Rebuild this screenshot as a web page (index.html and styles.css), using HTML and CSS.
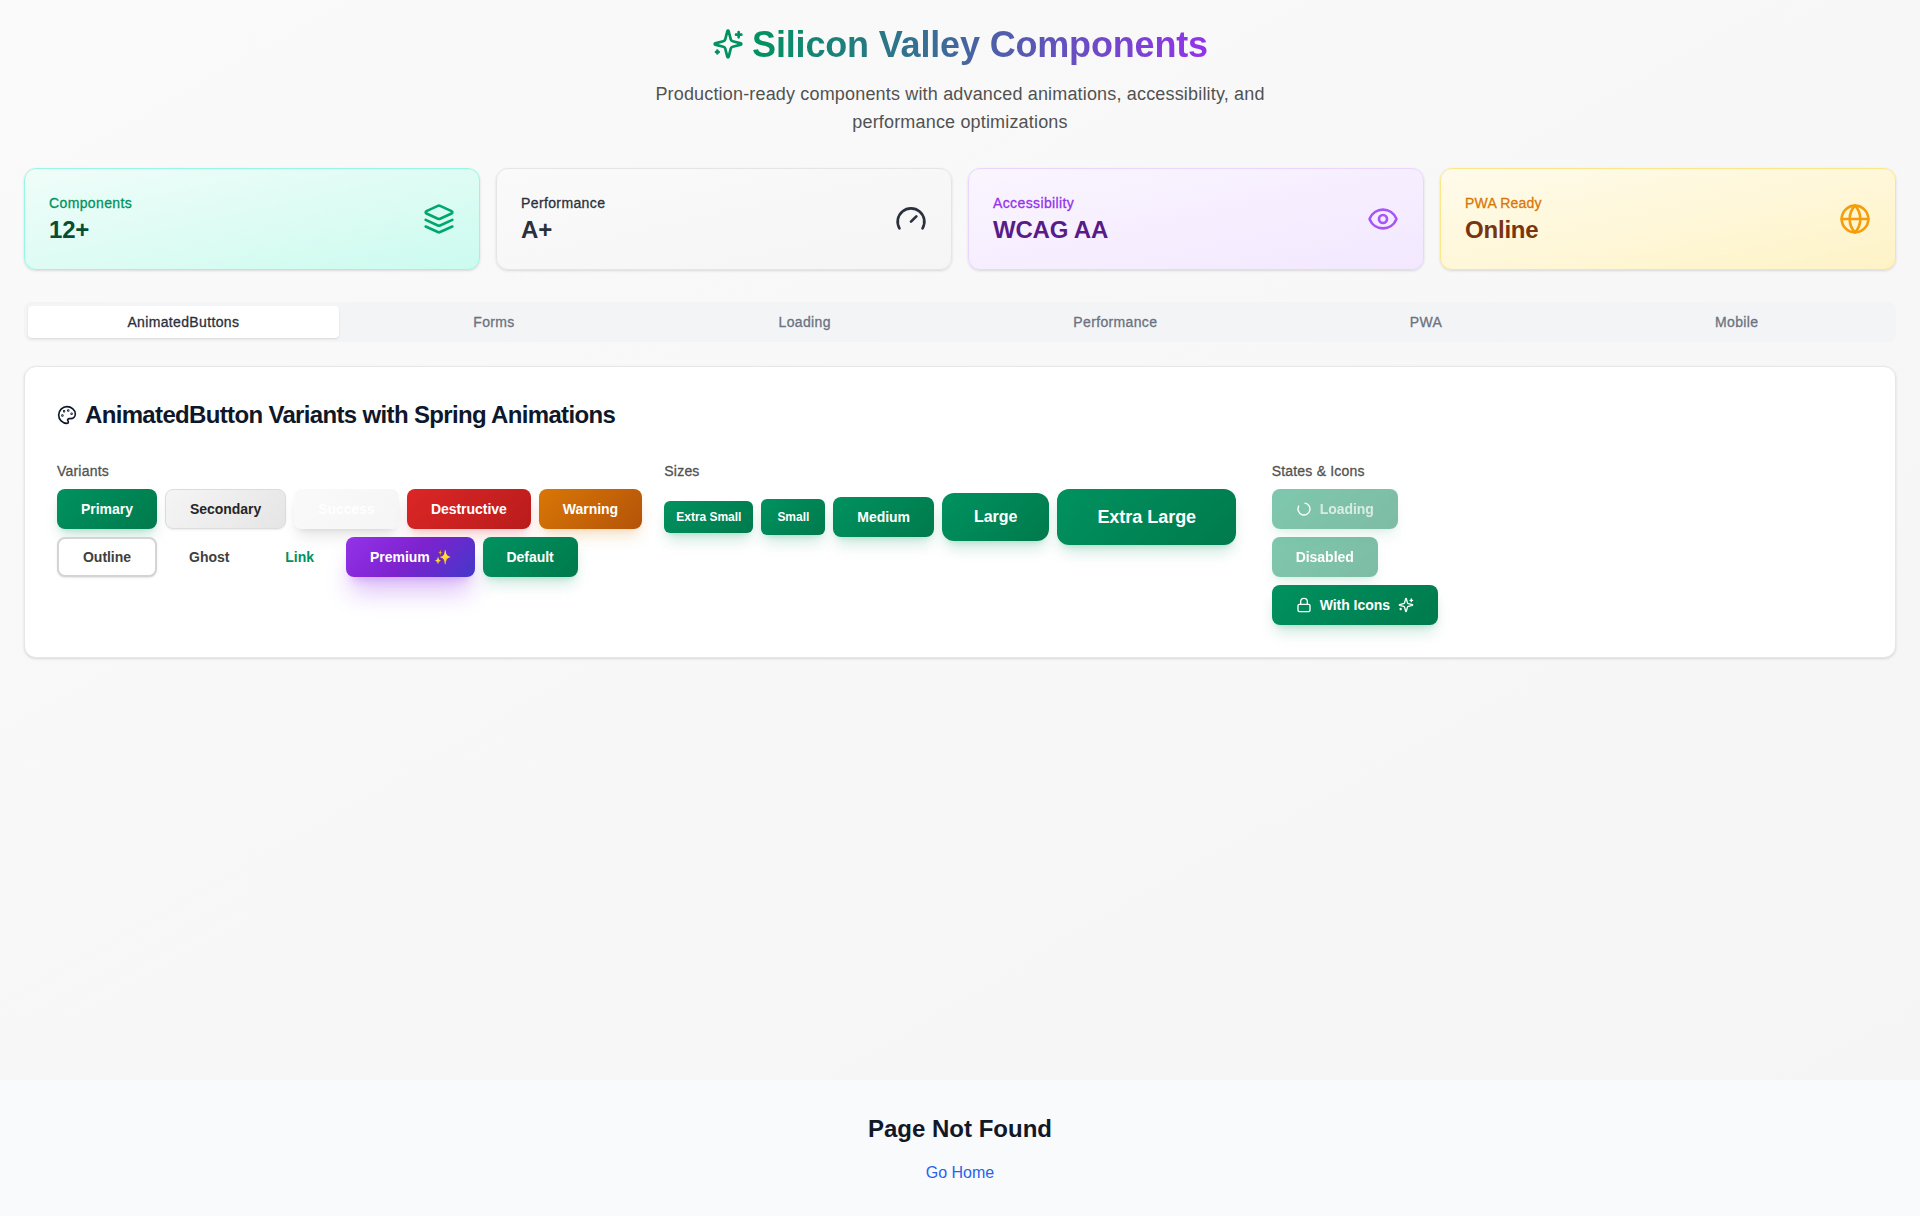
FILE: index.html
```html
<!DOCTYPE html>
<html lang="en">
<head>
<meta charset="utf-8">
<title>Silicon Valley Components</title>
<link rel="stylesheet" href="styles.css">
</head>
<body>
<svg class="sprite" aria-hidden="true">
  <symbol id="sparkles" viewBox="0 0 24 24"><path d="M9.937 15.5A2 2 0 0 0 8.5 14.063l-6.135-1.582a.5.5 0 0 1 0-.962L8.5 9.936A2 2 0 0 0 9.937 8.5l1.582-6.135a.5.5 0 0 1 .963 0L14.063 8.5A2 2 0 0 0 15.5 9.937l6.135 1.581a.5.5 0 0 1 0 .964L15.5 14.063a2 2 0 0 0-1.437 1.437l-1.582 6.135a.5.5 0 0 1-.963 0z"/><path d="M20 3v4M22 5h-4M4 17v2M5 18H3"/></symbol>
</svg>
<main class="showcase">
  <header class="hero">
    <h1 class="hero-title"><svg class="icon hero-icon"><use href="#sparkles"/></svg><span class="hero-text">Silicon Valley Components</span></h1>
    <p class="hero-sub">Production-ready components with advanced animations, accessibility, and performance optimizations</p>
  </header>

  <section class="stats">
    <article class="stat stat-green">
      <div><p class="stat-label">Components</p><p class="stat-value">12+</p></div>
      <svg class="icon stat-icon" viewBox="0 0 24 24"><path d="m12.83 2.18a2 2 0 0 0-1.66 0L2.6 6.08a1 1 0 0 0 0 1.83l8.58 3.91a2 2 0 0 0 1.66 0l8.58-3.9a1 1 0 0 0 0-1.83Z"/><path d="m22 17.65-9.17 4.16a2 2 0 0 1-1.66 0L2 17.65"/><path d="m22 12.65-9.17 4.16a2 2 0 0 1-1.66 0L2 12.65"/></svg>
    </article>
    <article class="stat stat-gray">
      <div><p class="stat-label">Performance</p><p class="stat-value">A+</p></div>
      <svg class="icon stat-icon" viewBox="0 0 24 24"><path d="m12 14 4-4"/><path d="M3.34 19a10 10 0 1 1 17.32 0"/></svg>
    </article>
    <article class="stat stat-purple">
      <div><p class="stat-label">Accessibility</p><p class="stat-value">WCAG AA</p></div>
      <svg class="icon stat-icon" viewBox="0 0 24 24"><path d="M2.062 12.348a1 1 0 0 1 0-.696 10.75 10.75 0 0 1 19.876 0 1 1 0 0 1 0 .696 10.75 10.75 0 0 1-19.876 0"/><circle cx="12" cy="12" r="3"/></svg>
    </article>
    <article class="stat stat-amber">
      <div><p class="stat-label">PWA Ready</p><p class="stat-value">Online</p></div>
      <svg class="icon stat-icon" viewBox="0 0 24 24"><circle cx="12" cy="12" r="10"/><path d="M12 2a14.5 14.5 0 0 0 0 20 14.5 14.5 0 0 0 0-20"/><path d="M2 12h20"/></svg>
    </article>
  </section>

  <nav class="tabs">
    <button class="tab tab-active">AnimatedButtons</button>
    <button class="tab">Forms</button>
    <button class="tab">Loading</button>
    <button class="tab">Performance</button>
    <button class="tab">PWA</button>
    <button class="tab">Mobile</button>
  </nav>

  <section class="panel">
    <h3 class="panel-title"><svg class="icon panel-icon" viewBox="0 0 24 24"><circle cx="13.5" cy="6.5" r=".5"/><circle cx="17.5" cy="10.5" r=".5"/><circle cx="8.5" cy="7.5" r=".5"/><circle cx="6.5" cy="12.5" r=".5"/><path d="M12 2C6.5 2 2 6.5 2 12s4.5 10 10 10c.926 0 1.648-.746 1.648-1.688 0-.437-.18-.835-.437-1.125-.29-.289-.438-.652-.438-1.125a1.64 1.64 0 0 1 1.668-1.668h1.996c3.051 0 5.555-2.503 5.555-5.554C21.965 6.012 17.461 2 12 2z"/></svg><span>AnimatedButton Variants with Spring Animations</span></h3>
    <div class="groups">
      <div class="group">
        <h4 class="group-label">Variants</h4>
        <div class="row">
          <button class="btn primary">Primary</button>
          <button class="btn secondary">Secondary</button>
          <button class="btn success">Success</button>
          <button class="btn destructive">Destructive</button>
          <button class="btn warning">Warning</button>
          <button class="btn outline">Outline</button>
          <button class="btn ghost">Ghost</button>
          <button class="btn link">Link</button>
          <button class="btn premium">Premium ✨</button>
          <button class="btn primary">Default</button>
        </div>
      </div>
      <div class="group">
        <h4 class="group-label">Sizes</h4>
        <div class="row row-center">
          <button class="btn primary xs">Extra Small</button>
          <button class="btn primary sm">Small</button>
          <button class="btn primary">Medium</button>
          <button class="btn primary lg">Large</button>
          <button class="btn primary xl">Extra Large</button>
        </div>
      </div>
      <div class="group">
        <h4 class="group-label">States &amp; Icons</h4>
        <div class="stack">
          <button class="btn primary faded"><svg class="icon btn-icon" viewBox="0 0 24 24"><path d="M21 12a9 9 0 1 1-6.219-8.56" transform="rotate(-80 12 12)"/></svg><span class="loading-text">Loading</span></button>
          <button class="btn primary faded">Disabled</button>
          <button class="btn primary"><svg class="icon btn-icon" viewBox="0 0 24 24"><rect width="18" height="11" x="3" y="11" rx="2"/><path d="M7 11V7a5 5 0 0 1 10 0v4"/></svg><span>With Icons</span><svg class="icon btn-icon"><use href="#sparkles"/></svg></button>
        </div>
      </div>
    </div>
  </section>
</main>
<footer class="missing">
  <h2 class="missing-title">Page Not Found</h2>
  <a class="missing-link" href="#">Go Home</a>
</footer>
</body>
</html>
```
FILE: styles.css
```css
* { box-sizing: border-box; }
body, h1, h2, h3, h4, p { margin: 0; }
body { font-family: "Liberation Sans", Arial, sans-serif; color: #0f172a; }
button { font: inherit; border: 0; background: none; }
.sprite { display: none; }
.icon { fill: none; stroke: currentColor; stroke-width: 2; stroke-linecap: round; stroke-linejoin: round; flex: none; }

.showcase { min-height: 1080px; padding: 24px; background: linear-gradient(to bottom right, #fafafa, #f5f5f5); }
.hero { display: flex; flex-direction: column; align-items: center; gap: 16px; text-align: center; }
.hero-title { display: flex; align-items: center; gap: 8px; height: 40px; font-size: 36px; font-weight: 700; letter-spacing: -.17px; }
.hero-icon { width: 32px; height: 32px; color: #00925f; }
.hero-text { padding-top: 2px; line-height: 42px; background: linear-gradient(to right, #00925f, #9333ea); background-clip: text; color: transparent; }
.hero-sub { max-width: 672px; font-size: 18px; line-height: 28px; letter-spacing: .17px; color: #525252; }

.stats { display: grid; grid-template-columns: repeat(4, 1fr); gap: 16px; margin-top: 32px; }
.stat { display: flex; align-items: center; justify-content: space-between; padding: 24px; border: 1px solid; border-radius: 12px; box-shadow: 0 1px 3px rgba(0,0,0,.1), 0 1px 2px -1px rgba(0,0,0,.1); }
.stat-label { font-size: 14px; line-height: 20px; letter-spacing: .38px; -webkit-text-stroke: .3px; }
.stat-value { height: 32px; padding-top: 1px; font-size: 24px; line-height: 32px; font-weight: 700; letter-spacing: -.2px; }
.stat-icon { width: 32px; height: 32px; }
.stat-green { background: linear-gradient(to bottom right, #f0fdf9, #ccfbef); border-color: #99f6e0; color: #00925f; }
.stat-green .stat-value { color: #064e33; }
.stat-green .stat-icon { color: #00a76d; }
.stat-gray { background: linear-gradient(to bottom right, #fafafa, #f5f5f5); border-color: #e5e5e8; color: #2a303c; }
.stat-purple { background: linear-gradient(to bottom right, #faf5ff, #f3e8ff); border-color: #e9d5ff; color: #9333ea; }
.stat-purple .stat-value { color: #581c87; }
.stat-purple .stat-icon { color: #a855f7; }
.stat-amber { background: linear-gradient(to bottom right, #fffbeb, #fef3c7); border-color: #fde68a; color: #d97706; }
.stat-amber .stat-label { letter-spacing: .2px; }
.stat-amber .stat-value { color: #78350f; }
.stat-amber .stat-icon { color: #f59e0b; }

.tabs { display: grid; grid-template-columns: repeat(6, 1fr); height: 40px; margin-top: 32px; padding: 4px; border-radius: 8px; background: #f3f4f6; }
.tab { font-size: 14px; line-height: 20px; letter-spacing: .35px; color: #6b7280; border-radius: 4px; -webkit-text-stroke: .3px; }
.tab-active { background: #fff; color: #2a303c; box-shadow: 0 1px 2px rgba(0,0,0,.12); }

.panel { margin-top: 24px; padding: 32px; border: 1px solid #e5e7eb; border-radius: 12px; background: #fff; box-shadow: 0 1px 3px rgba(0,0,0,.1), 0 1px 2px -1px rgba(0,0,0,.1); }
.panel-title { display: flex; align-items: center; gap: 8px; font-size: 24px; line-height: 32px; font-weight: 700; letter-spacing: -.66px; }
.panel-icon { width: 20px; height: 20px; }
.groups { display: grid; grid-template-columns: repeat(3, 1fr); gap: 16px; margin-top: 30px; }
.group { display: flex; flex-direction: column; gap: 8px; }
.group-label { font-size: 14px; line-height: 20px; font-weight: 400; letter-spacing: .2px; color: #525252; -webkit-text-stroke: .3px; }
.row { display: flex; flex-wrap: wrap; gap: 8px; }
.row-center { align-items: center; }
.stack { display: flex; flex-direction: column; align-items: flex-start; gap: 8px; }

.btn { display: inline-flex; align-items: center; justify-content: center; gap: 8px; height: 40px; padding: 0 24px; border-radius: 8px; font-size: 14px; font-weight: 700; letter-spacing: -.03px; white-space: nowrap; color: #fff; }
.btn-icon { width: 16px; height: 16px; }
.primary { background: linear-gradient(135deg, #00925f, #007a4d); box-shadow: 0 10px 15px -3px rgba(0,146,95,.2), 0 4px 6px -4px rgba(0,146,95,.25); }
.secondary { background: linear-gradient(135deg, #f5f5f5, #e5e5e5); color: #262626; border: 1px solid #dcdcdc; box-shadow: 0 1px 2px rgba(0,0,0,.08); }
.success { background: linear-gradient(135deg, #fafafa, #f5f5f5); box-shadow: 0 10px 15px -3px rgba(0,0,0,.1), 0 4px 6px -4px rgba(0,0,0,.1); }
.destructive { background: linear-gradient(135deg, #dc2626, #b91c1c); box-shadow: 0 10px 15px -3px rgba(220,38,38,.2), 0 4px 6px -4px rgba(220,38,38,.2); }
.warning { background: linear-gradient(135deg, #d97706, #b45309); box-shadow: 0 10px 15px -3px rgba(217,119,6,.2), 0 4px 6px -4px rgba(217,119,6,.2); }
.outline { background: #fff; border: 2px solid #d4d4d4; color: #404040; box-shadow: 0 1px 2px rgba(0,0,0,.1); }
.ghost { color: #404040; }
.link { color: #00925f; }
.premium { background: linear-gradient(135deg, #9333ea, #7e22ce 50%, #4338ca); box-shadow: 0 20px 25px -5px rgba(147,51,234,.3), 0 8px 10px -6px rgba(147,51,234,.3); }
.faded { opacity: .5; }
.loading-text { opacity: .7; }
.xs { height: 32px; padding: 0 12px; border-radius: 6px; font-size: 12px; }
.sm { height: 36px; padding: 0 16px; border-radius: 6px; font-size: 12px; }
.lg { height: 48px; padding: 0 32px; border-radius: 12px; font-size: 16px; }
.xl { height: 56px; padding: 0 40px; border-radius: 12px; font-size: 18px; }

.missing { display: flex; flex-direction: column; align-items: center; gap: 16px; height: 136px; padding: 33px 32px 0; background: #f9fafc; }
.missing-title { font-size: 24px; line-height: 32px; color: #111827; }
.missing-link { font-size: 16px; line-height: 24px; color: #2563eb; text-decoration: none; }
```
